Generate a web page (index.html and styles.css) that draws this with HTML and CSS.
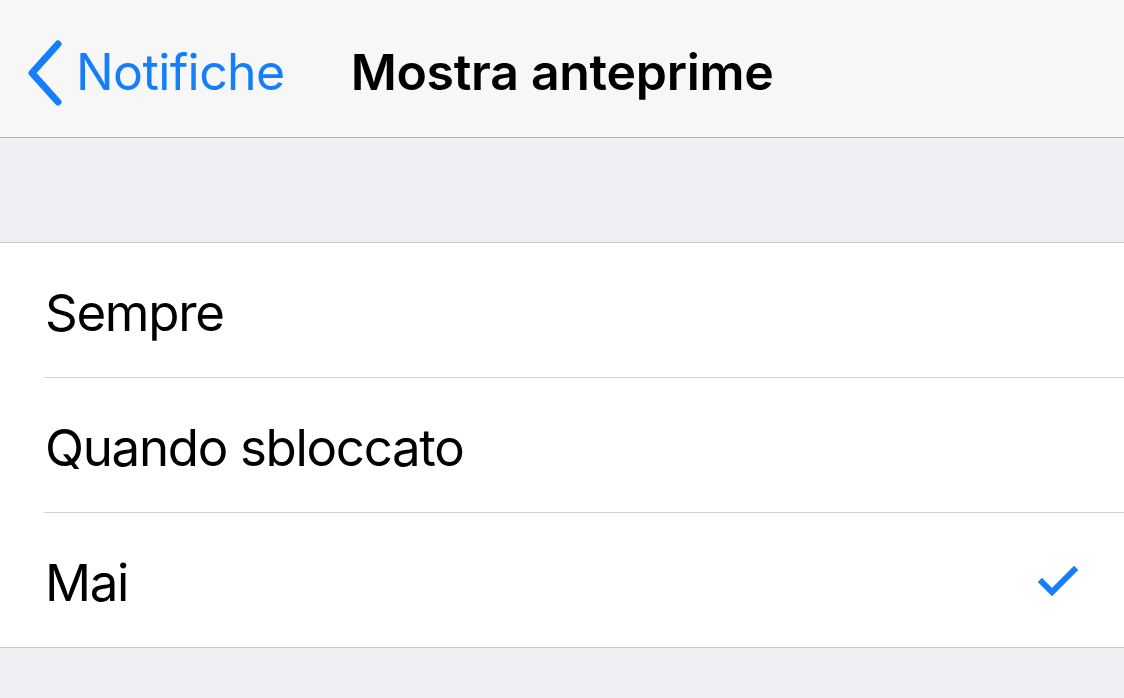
FILE: index.html
```html
<!DOCTYPE html>
<html lang="it">
<head>
<meta charset="utf-8">
<link rel="stylesheet" href="styles.css">
</head>
<body>
<header class="navbar">
  <a class="back">
    <svg class="chev" width="40" height="66" viewBox="0 0 40 66"><path d="M34 4 L8 33 L34 62" fill="none" stroke="#157efb" stroke-width="7" stroke-linecap="round" stroke-linejoin="round"/></svg>
    <span class="back-label">Notifiche</span>
  </a>
  <h1 class="title">Mostra anteprime</h1>
</header>
<div class="gap"></div>
<ul class="group">
  <li class="row"><span class="label">Sempre</span></li>
  <li class="row"><span class="label">Quando sbloccato</span></li>
  <li class="row"><span class="label">Mai</span>
    <svg class="check" width="40" height="32" viewBox="0 0 40 32"><path d="M4 17 L14 27 L36 5" fill="none" stroke="#157efb" stroke-width="6" stroke-linecap="square"/></svg>
  </li>
</ul>
<div class="footer"></div>
</body>
</html>
```
FILE: styles.css
```css
* { box-sizing: border-box; }
html, body { margin: 0; padding: 0; }
body {
  width: 1124px;
  height: 698px;
  overflow: hidden;
  background: #efeff4;
  font-family: Inter, "Noto Sans", sans-serif;
  -webkit-font-smoothing: antialiased;
}
.navbar {
  height: 138px;
  background: #f7f7f8;
  border-bottom: 1px solid #b2b2b4;
  display: flex;
  align-items: center;
  padding-left: 24px;
  padding-top: 7px;
}
.back {
  display: flex;
  align-items: center;
  color: #157efb;
  font-size: 50px;
  letter-spacing: -0.6px;
}
.chev { margin-right: 12px; margin-top: 2px; }
.title {
  margin: 0 0 0 66px;
  font-size: 50px;
  font-weight: 600;
  color: #000;
  letter-spacing: -0.3px;
}
.gap { height: 105px; border-bottom: 1px solid #c8c7cc; }
.group {
  list-style: none;
  margin: 0;
  padding: 0 0 0 44px;
  background: #fff;
  border-bottom: 1px solid #c8c7cc;
}
.row {
  height: 135px;
  display: flex;
  align-items: center;
  justify-content: space-between;
  padding-right: 46px;
  padding-top: 4px;
  border-bottom: 1px solid #d3d3d6;
  font-size: 51px;
  color: #000;
}
.row:last-child { border-bottom: none; height: 134px; }
.label { margin-left: 1px; letter-spacing: -1.3px; }
.check { margin-top: -2px; }
.footer { height: 50px; }
```
